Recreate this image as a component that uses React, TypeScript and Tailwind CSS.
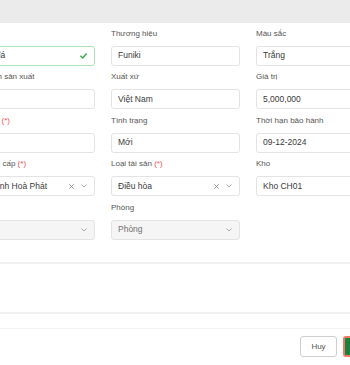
import React from 'react';

type Field = {
  label: string;
  required?: boolean;
  value?: string;
  placeholder?: string;
  kind?: 'input' | 'select' | 'valid';
  clearable?: boolean;
  disabled?: boolean;
};

const Chevron = () => (
  <svg width="6" height="4" viewBox="0 0 6 4" className="shrink-0">
    <path d="M0.7 0.8 L3 3 L5.3 0.8" fill="none" stroke="#a0a0a0" strokeWidth="0.9" strokeLinecap="round" />
  </svg>
);

const Clear = () => (
  <svg width="5" height="5" viewBox="0 0 5 5" className="shrink-0">
    <path d="M0.6 0.6 L4.4 4.4 M4.4 0.6 L0.6 4.4" stroke="#8c8c8c" strokeWidth="0.9" strokeLinecap="round" />
  </svg>
);

const Check = () => (
  <svg width="7" height="6" viewBox="0 0 7 6" className="shrink-0">
    <path d="M0.9 3.2 L2.7 5 L6.2 1" fill="none" stroke="#3fae55" strokeWidth="1.6" strokeLinecap="round" strokeLinejoin="round" />
  </svg>
);

const fields: Field[] = [
  { label: 'Tên', required: true, value: 'Chậu đá', kind: 'valid' },
  { label: 'Thương hiệu', value: 'Funiki' },
  { label: 'Màu sắc', value: 'Trắng' },
  { label: 'Thời điểm sản xuất', value: '' },
  { label: 'Xuất xứ', value: 'Việt Nam' },
  { label: 'Giá trị', value: '5,000,000' },
  { label: 'Số lượng', required: true, value: '' },
  { label: 'Tình trạng', value: 'Mới' },
  { label: 'Thời hạn bảo hành', value: '09-12-2024' },
  { label: 'Nhà cung cấp', required: true, value: 'Cty Thịnh Hoà Phát', kind: 'select', clearable: true },
  { label: 'Loại tài sản', required: true, value: 'Điều hòa', kind: 'select', clearable: true },
  { label: 'Kho', value: 'Kho CH01', kind: 'select' },
  { label: 'Tầng', placeholder: 'Tầng', kind: 'select', disabled: true },
  { label: 'Phòng', placeholder: 'Phòng', kind: 'select', disabled: true },
];

function FormField({ field }: { field: Field }) {
  const boxClass = field.kind === 'valid'
    ? 'border-[#a9e3b4]'
    : 'border-[#e3e3e3]';
  return (
    <div className="flex flex-col">
      <div className="h-[12px] leading-[12px] mb-[6px] text-[8px] text-[#555] whitespace-nowrap">
        {field.label}
        {field.required && <span className="text-[#f0524f]"> (*)</span>}
      </div>
      <div
        className={`h-[20px] rounded-[3px] border flex items-center pl-[6px] pr-[7px] gap-[7px] ${boxClass} ${field.disabled ? 'bg-[#f5f5f5]' : 'bg-white'}`}
      >
        <span className={`flex-1 text-[8.5px] whitespace-nowrap overflow-hidden ${field.value ? 'text-[#3a3a3a]' : 'text-[#707070]'}`}>
          {field.value || field.placeholder}
        </span>
        {field.kind === 'valid' && <Check />}
        {field.clearable && <Clear />}
        {field.kind === 'select' && <Chevron />}
      </div>
    </div>
  );
}

export default function App() {
  return (
    <div className="w-[350px] h-[365px] overflow-hidden bg-white font-['Liberation_Sans',Arial,sans-serif]">
      <div className="h-[23px] bg-[#ebebeb]" />

      <div className="-ml-[34px] w-[420px] pt-[4.5px]">
        <div className="grid grid-cols-[129px_129px_129px] gap-x-4 gap-y-[5.5px]">
          {fields.map((f) => (
            <FormField key={f.label} field={f} />
          ))}
        </div>
      </div>

      <div className="mt-[22.5px] h-[52px] border-y-2 border-[#efefef]" />

      <div className="mt-[14px] border-t border-[#f3f3f3] -mr-[57px] pt-[7px] flex justify-end gap-[6px]">
        <button className="h-[21px] w-[37px] rounded-[3px] border border-[#cfcfcf] bg-white text-[8px] text-[#555]">
          Huỷ
        </button>
        <button className="h-[21px] w-[64px] rounded-[3px] border-2 border-[#ef7b66] bg-[#1f7f3f] text-[8px] text-white">
          Lưu
        </button>
      </div>
    </div>
  );
}
